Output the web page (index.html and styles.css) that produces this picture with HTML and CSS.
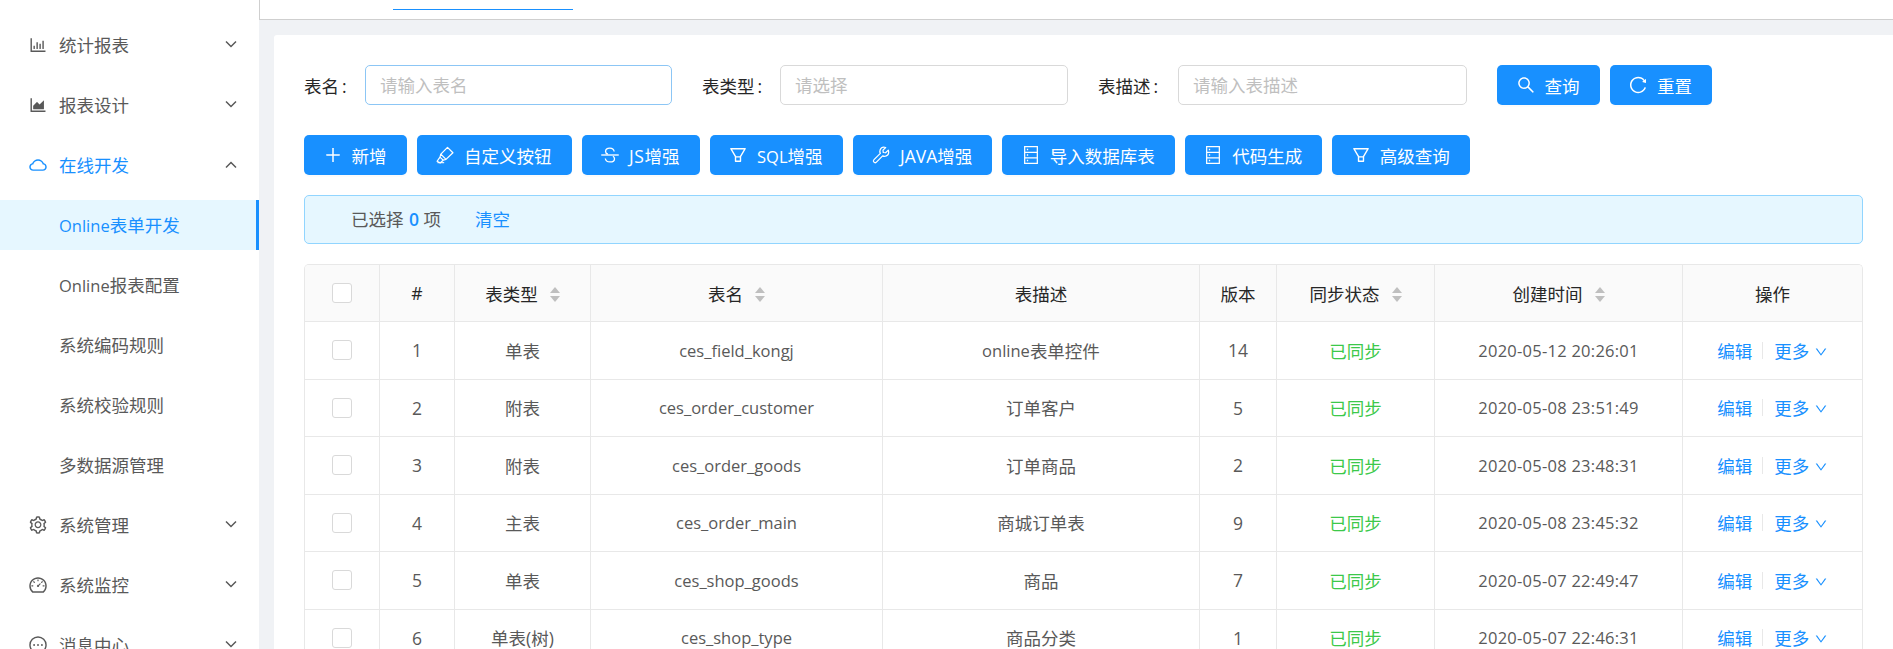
FILE: index.html
```html
<!DOCTYPE html>
<html lang="zh-CN">
<head>
<meta charset="utf-8">
<title>Online表单开发</title>
<link rel="stylesheet" href="styles.css">
</head>
<body>
<svg class="defs" aria-hidden="true">
  <symbol id="i-bar" viewBox="0 0 1024 1024"><path d="M888 792H200V168c0-4.400-3.600-8-8-8h-56c-4.400 0-8 3.600-8 8v688c0 4.400 3.600 8 8 8h752c4.400 0 8-3.600 8-8v-56c0-4.400-3.600-8-8-8zm-600-80h56c4.400 0 8-3.600 8-8V560c0-4.400-3.600-8-8-8h-56c-4.400 0-8 3.600-8 8v144c0 4.400 3.600 8 8 8zm152 0h56c4.400 0 8-3.600 8-8V384c0-4.400-3.600-8-8-8h-56c-4.400 0-8 3.600-8 8v320c0 4.400 3.600 8 8 8zm152 0h56c4.400 0 8-3.600 8-8V462c0-4.400-3.600-8-8-8h-56c-4.400 0-8 3.600-8 8v242c0 4.400 3.600 8 8 8zm152 0h56c4.400 0 8-3.600 8-8V304c0-4.400-3.600-8-8-8h-56c-4.400 0-8 3.600-8 8v400c0 4.400 3.600 8 8 8z"/></symbol>
  <symbol id="i-area" viewBox="0 0 1024 1024"><path d="M888 792H200V168c0-4.400-3.600-8-8-8h-56c-4.400 0-8 3.600-8 8v688c0 4.400 3.600 8 8 8h752c4.400 0 8-3.600 8-8v-56c0-4.400-3.600-8-8-8zm-616-64h536c4.400 0 8-3.600 8-8V284c0-7.200-8.700-10.700-13.700-5.700L592 488.600l-125.400-124a8.030 8.030 0 0 0-11.300 0l-189 189.600a7.870 7.870 0 0 0-2.300 5.600V720c0 4.400 3.600 8 8 8z"/></symbol>
  <symbol id="i-cloud" viewBox="0 0 1024 1024"><path d="M811.400 418.700C765.600 297.900 648.900 212 512.200 212S258.800 297.800 213 418.600C127.300 441.100 64 519.100 64 612c0 110.500 89.500 200 199.900 200h496.200C870.500 812 960 722.500 960 612c0-92.700-63.100-170.700-148.600-193.300zm36.300 281a123.070 123.070 0 0 1-87.600 36.300H263.900c-33.100 0-64.200-12.900-87.600-36.300A123.300 123.300 0 0 1 140 612c0-28 9.100-54.300 26.200-76.300a125.700 125.700 0 0 1 66.100-43.700l37.900-9.900 13.900-36.600c8.600-22.800 20.600-44.100 35.700-63.400a245.600 245.600 0 0 1 52.400-49.900c41.100-28.900 89.500-44.200 140-44.200s98.900 15.300 140 44.200c19.900 14 37.500 30.800 52.400 49.900 15.100 19.300 27.100 40.700 35.700 63.400l13.800 36.500 37.800 10c54.300 14.500 92.100 63.800 92.100 120 0 33.100-12.900 64.300-36.300 87.700z"/></symbol>
  <symbol id="i-setting" viewBox="0 0 1024 1024"><path d="M924.800 625.700l-65.500-56c3.100-19 4.700-38.400 4.700-57.800s-1.600-38.800-4.700-57.800l65.500-56a32.030 32.030 0 0 0 9.300-35.200l-.9-2.600a443.740 443.740 0 0 0-79.700-137.900l-1.800-2.100a32.120 32.120 0 0 0-35.100-9.500l-81.300 28.900c-30-24.600-63.500-44-99.700-57.600l-15.700-85a32.050 32.050 0 0 0-25.800-25.700l-2.700-.5c-52.100-9.400-106.900-9.400-159 0l-2.700.5a32.050 32.050 0 0 0-25.800 25.700l-15.800 85.400a351.860 351.860 0 0 0-99 57.400l-81.900-29.100a32 32 0 0 0-35.100 9.500l-1.800 2.100a446.020 446.020 0 0 0-79.700 137.900l-.9 2.600c-4.500 12.500-.8 26.500 9.300 35.200l66.300 56.600c-3.100 18.800-4.600 38-4.600 57.100 0 19.200 1.500 38.400 4.600 57.100L99 625.500a32.030 32.030 0 0 0-9.300 35.200l.9 2.600c18.100 50.400 44.900 96.900 79.700 137.900l1.800 2.100a32.120 32.120 0 0 0 35.100 9.500l81.900-29.100c29.800 24.500 63.100 43.900 99 57.400l15.800 85.400a32.050 32.050 0 0 0 25.800 25.700l2.700.5a449.400 449.400 0 0 0 159 0l2.700-.5a32.050 32.050 0 0 0 25.800-25.700l15.700-85a350 350 0 0 0 99.700-57.600l81.300 28.900a32 32 0 0 0 35.100-9.500l1.800-2.100c34.800-41.100 61.600-87.500 79.700-137.900l.9-2.600c4.500-12.300.8-26.300-9.300-35zM788.300 465.900c2.500 15.100 3.800 30.600 3.800 46.100s-1.300 31-3.800 46.100l-6.600 40.100 74.700 63.900a370.030 370.030 0 0 1-42.600 73.600L721 702.800l-31.400 25.800c-23.900 19.600-50.500 35-79.300 45.800l-38.100 14.300-17.900 97a377.500 377.500 0 0 1-85 0l-17.900-97.200-37.800-14.500c-28.500-10.800-55-26.200-78.700-45.700l-31.400-25.900-93.400 33.200c-17-22.900-31.200-47.600-42.600-73.600l75.500-64.500-6.500-40c-2.400-14.900-3.700-30.300-3.700-45.500 0-15.300 1.200-30.600 3.700-45.500l6.500-40-75.500-64.500c11.300-26.100 25.600-50.700 42.600-73.600l93.400 33.200 31.400-25.900c23.700-19.500 50.200-34.900 78.700-45.700l37.900-14.300 17.900-97.200c28.100-3.200 56.800-3.200 85 0l17.900 97 38.100 14.300c28.700 10.800 55.400 26.200 79.300 45.800l31.400 25.800 92.800-32.900c17 22.900 31.200 47.600 42.600 73.600L781.800 426l6.500 39.900zM512 326c-97.200 0-176 78.800-176 176s78.800 176 176 176 176-78.800 176-176-78.800-176-176-176zm79.200 255.200A111.600 111.600 0 0 1 512 614c-29.900 0-58-11.700-79.200-32.800A111.600 111.600 0 0 1 400 502c0-29.900 11.700-58 32.800-79.200C454 401.600 482.100 390 512 390c29.900 0 58 11.600 79.200 32.800A111.600 111.600 0 0 1 624 502c0 29.900-11.700 58-32.800 79.200z"/></symbol>
  <symbol id="i-dash" viewBox="0 0 1024 1024"><path d="M924.800 385.600a446.700 446.700 0 0 0-96-142.400 446.700 446.700 0 0 0-142.400-96C631.100 123.800 572.500 112 512 112s-119.100 11.800-174.400 35.200a446.700 446.700 0 0 0-142.400 96 446.700 446.700 0 0 0-96 142.400C75.800 440.900 64 499.500 64 560c0 132.700 58.300 257.700 159.900 343.100l1.700 1.400c5.800 4.800 13.100 7.500 20.600 7.500h531.700c7.500 0 14.800-2.700 20.600-7.500l1.700-1.400C901.700 817.700 960 692.700 960 560c0-60.500-11.900-119.100-35.200-174.400zM761.400 836H262.600A371.120 371.120 0 0 1 140 560c0-99.400 38.700-192.800 109-263 70.300-70.300 163.700-109 263-109 99.400 0 192.800 38.700 263 109 70.300 70.300 109 163.700 109 263 0 105.600-44.500 205.500-122.600 276zM623.500 421.500a8.030 8.030 0 0 0-11.300 0L527.700 506c-18.700-5-39.400-.2-54.100 14.500a55.950 55.950 0 0 0 0 79.200 55.950 55.950 0 0 0 79.200 0 55.870 55.870 0 0 0 14.500-54.100l84.500-84.500c3.100-3.100 3.100-8.200 0-11.300l-28.300-28.300zM490 320h44c4.400 0 8-3.600 8-8v-80c0-4.400-3.600-8-8-8h-44c-4.400 0-8 3.600-8 8v80c0 4.400 3.600 8 8 8zm260 218v44c0 4.400 3.600 8 8 8h80c4.400 0 8-3.600 8-8v-44c0-4.400-3.600-8-8-8h-80c-4.400 0-8 3.600-8 8zm12.700-197.200l-31.100-31.100a8.030 8.030 0 0 0-11.300 0l-56.600 56.600a8.030 8.030 0 0 0 0 11.300l31.100 31.100c3.100 3.100 8.200 3.100 11.300 0l56.600-56.600c3.100-3.100 3.100-8.200 0-11.300zm-458.600-31.100a8.030 8.030 0 0 0-11.300 0l-31.100 31.100a8.030 8.030 0 0 0 0 11.300l56.600 56.600c3.100 3.100 8.200 3.100 11.300 0l31.100-31.100c3.100-3.100 3.100-8.200 0-11.300l-56.600-56.600zM262 530h-80c-4.400 0-8 3.600-8 8v44c0 4.400 3.600 8 8 8h80c4.400 0 8-3.600 8-8v-44c0-4.400-3.600-8-8-8z"/></symbol>
  <symbol id="i-msg" viewBox="0 0 1024 1024"><circle cx="512" cy="512" r="412" fill="none" stroke="currentColor" stroke-width="72"/><circle cx="312" cy="512" r="48"/><circle cx="512" cy="512" r="48"/><circle cx="712" cy="512" r="48"/></symbol>
  <symbol id="i-down" viewBox="0 0 12 12"><path d="M1 3.500 6 8.500 11 3.500" fill="none" stroke="currentColor" stroke-width="1.500"/></symbol>
  <symbol id="i-up" viewBox="0 0 12 12"><path d="M1 8.500 6 3.500 11 8.500" fill="none" stroke="currentColor" stroke-width="1.500"/></symbol>
  <symbol id="i-thin" viewBox="0 0 1024 1024"><path d="M884 256h-75c-5.100 0-9.900 2.500-12.900 6.600L512 654.200 227.900 262.600c-3-4.100-7.800-6.600-12.900-6.600h-75c-6.500 0-10.300 7.400-6.500 12.700l352.600 486.100c12.800 17.600 39 17.600 51.700 0l352.600-486.100c3.900-5.300.1-12.700-6.400-12.700z"/></symbol>
  <symbol id="i-search" viewBox="0 0 1024 1024"><path d="M909.600 854.500L649.900 594.800C690.200 542.700 712 479 712 412c0-80.200-31.300-155.400-87.900-212.100-56.600-56.700-132-87.900-212.100-87.900s-155.500 31.300-212.100 87.900C143.200 256.500 112 331.800 112 412c0 80.100 31.300 155.500 87.900 212.100C256.500 680.800 331.800 712 412 712c67 0 130.600-21.800 182.700-62l259.700 259.600a8.200 8.200 0 0 0 11.600 0l43.600-43.500a8.200 8.200 0 0 0 0-11.600zM570.400 570.400C528 612.700 471.800 636 412 636s-116-23.300-158.400-65.600C211.300 528 188 471.800 188 412s23.300-116.100 65.600-158.400C296 211.300 352.200 188 412 188s116.100 23.200 158.400 65.600S636 352.200 636 412s-23.300 116.100-65.600 158.400z"/></symbol>
  <symbol id="i-reload" viewBox="0 0 1024 1024"><path d="M909.100 209.300l-56.400 44.100C775.800 155.100 656.200 92 521.900 92 290 92 102.300 279.500 102 511.500 101.700 743.700 289.800 932 521.900 932c181.300 0 335.800-115 394.600-276.100 1.500-4.200-.7-8.900-4.900-10.300l-56.700-19.500a8 8 0 0 0-10.100 4.800c-1.800 5-3.800 10-5.900 14.900-17.300 41-42.100 77.800-73.700 109.400A344.770 344.770 0 0 1 655.900 829c-42.300 17.900-87.400 27-133.800 27-46.500 0-91.500-9.100-133.800-27A341.500 341.500 0 0 1 279 755.200a342.160 342.160 0 0 1-73.700-109.400c-17.900-42.400-27-87.400-27-133.900s9.100-91.500 27-133.900c17.300-41 42.100-77.800 73.700-109.400 31.600-31.600 68.400-56.400 109.300-73.800 42.300-17.900 87.400-27 133.800-27 46.500 0 91.500 9.100 133.800 27a341.500 341.500 0 0 1 109.300 73.800c9.900 9.900 19.200 20.400 27.800 31.400l-60.200 47a8 8 0 0 0 3 14.100l175.600 43c5 1.200 9.900-2.600 9.900-7.700l.8-180.900c-.1-6.600-7.800-10.300-13-6.200z"/></symbol>
  <symbol id="i-plus" viewBox="0 0 1024 1024"><path d="M482 152h60q8 0 8 8v704q0 8-8 8h-60q-8 0-8-8V160q0-8 8-8z"/><path d="M176 474h672q8 0 8 8v60q0 8-8 8H176q-8 0-8-8v-60q0-8 8-8z"/></symbol>
  <symbol id="i-filter" viewBox="0 0 1024 1024"><path d="M880.100 154H143.900c-24.500 0-39.800 26.700-27.500 48L349 597.400V838c0 17.700 14.200 32 31.800 32h262.400c17.600 0 31.800-14.300 31.800-32V597.400L907.700 202c12.200-21.300-3.100-48-27.600-48zM603.400 798H420.600V642h182.900v156zm9.600-236.600l-9.500 16.600h-183l-9.500-16.600L212.700 226h598.600L613 561.400z"/></symbol>
  <symbol id="i-high" viewBox="0 0 24 24"><path d="M15 2.800 21.500 9.300 13.200 17.300 7 11ZM7 11 6 14.500 9.800 18.200 13.200 17.300M6 14.500 2.500 19.500 6.200 21.500 9.800 18.200" fill="none" stroke="currentColor" stroke-width="1.500" stroke-linejoin="round"/><path d="M3 21.200H11" fill="none" stroke="currentColor" stroke-width="1.300"/></symbol>
  <symbol id="i-strike" viewBox="0 0 24 24"><path d="M1.500 12H22.500" fill="none" stroke="currentColor" stroke-width="1.600"/><path d="M17 7.800C16.500 5 14.500 3.800 11.800 3.800 8.800 3.800 6.700 5.200 6.700 7.700 6.700 9.200 7.500 10.400 9.500 11M15.500 13.500C16.800 14.300 17.400 15.400 17.400 16.400 17.400 18.900 15.200 20.300 12 20.300 9 20.300 6.800 18.900 6.400 16.200" fill="none" stroke="currentColor" stroke-width="1.600"/></symbol>
  <symbol id="i-tool" viewBox="0 0 24 24"><path d="M20.800 6.200 17.500 9.300 14.700 9 14.400 6.200 17.600 3C14.800 2.200 12 3.300 11 5.700 10.400 7.200 10.500 8.800 11.200 10L3.600 17.600C2.700 18.500 2.700 19.800 3.500 20.600 4.300 21.400 5.600 21.400 6.500 20.500L14 13C15.300 13.700 16.900 13.700 18.300 13.100 20.700 12 21.700 9 20.800 6.200Z" fill="none" stroke="currentColor" stroke-width="1.500" stroke-linejoin="round"/></symbol>
  <symbol id="i-db" viewBox="0 0 24 24"><path d="M4.400 2H19.600V22H4.400ZM4.400 8.700H19.600M4.400 15.300H19.600" fill="none" stroke="currentColor" stroke-width="1.500"/><path d="M7 4.600H8.600V6.200H7ZM7 11.200H8.600V12.800H7ZM7 17.800H8.600V19.400H7Z"/></symbol>
</svg>

<div class="app">
  <nav class="sidebar">
    <a class="menu-item"><svg class="menu-icon"><use href="#i-bar"/></svg><span class="menu-text">统计报表</span><svg class="chev"><use href="#i-down"/></svg></a>
    <a class="menu-item"><svg class="menu-icon"><use href="#i-area"/></svg><span class="menu-text">报表设计</span><svg class="chev"><use href="#i-down"/></svg></a>
    <a class="menu-item is-open"><svg class="menu-icon"><use href="#i-cloud"/></svg><span class="menu-text">在线开发</span><svg class="chev"><use href="#i-up"/></svg></a>
    <a class="menu-item sub is-active"><span class="menu-text"><span class="lat">Online</span>表单开发</span></a>
    <a class="menu-item sub"><span class="menu-text"><span class="lat">Online</span>报表配置</span></a>
    <a class="menu-item sub"><span class="menu-text">系统编码规则</span></a>
    <a class="menu-item sub"><span class="menu-text">系统校验规则</span></a>
    <a class="menu-item sub"><span class="menu-text">多数据源管理</span></a>
    <a class="menu-item"><svg class="menu-icon"><use href="#i-setting"/></svg><span class="menu-text">系统管理</span><svg class="chev"><use href="#i-down"/></svg></a>
    <a class="menu-item"><svg class="menu-icon"><use href="#i-dash"/></svg><span class="menu-text">系统监控</span><svg class="chev"><use href="#i-down"/></svg></a>
    <a class="menu-item"><svg class="menu-icon"><use href="#i-msg"/></svg><span class="menu-text">消息中心</span><svg class="chev"><use href="#i-down"/></svg></a>
  </nav>

  <main class="main">
    <div class="topbar"><div class="tab-line"></div></div>
    <section class="card">
      <form class="filters">
        <label class="field f-name"><span class="field-label l-name">表名<span class="colon">:</span></span><input class="input is-focus" placeholder="请输入表名"></label>
        <label class="field f-type"><span class="field-label l-type">表类型<span class="colon">:</span></span><input class="input" placeholder="请选择"></label>
        <label class="field f-desc"><span class="field-label l-desc">表描述<span class="colon">:</span></span><input class="input" placeholder="请输入表描述"></label>
        <div class="filter-actions">
          <button type="button" class="btn"><svg class="btn-icon"><use href="#i-search"/></svg>查询</button>
          <button type="button" class="btn"><svg class="btn-icon"><use href="#i-reload"/></svg>重置</button>
        </div>
      </form>

      <div class="toolbar">
        <button type="button" class="btn"><svg class="btn-icon"><use href="#i-plus"/></svg>新增</button>
        <button type="button" class="btn"><svg class="btn-icon"><use href="#i-high"/></svg>自定义按钮</button>
        <button type="button" class="btn"><svg class="btn-icon"><use href="#i-strike"/></svg><span><span class="wide">JS</span>增强</span></button>
        <button type="button" class="btn"><svg class="btn-icon"><use href="#i-filter"/></svg><span><span class="lat">SQL</span>增强</span></button>
        <button type="button" class="btn"><svg class="btn-icon"><use href="#i-tool"/></svg>JAVA增强</button>
        <button type="button" class="btn"><svg class="btn-icon"><use href="#i-db"/></svg>导入数据库表</button>
        <button type="button" class="btn"><svg class="btn-icon"><use href="#i-db"/></svg>代码生成</button>
        <button type="button" class="btn"><svg class="btn-icon"><use href="#i-filter"/></svg>高级查询</button>
      </div>

      <div class="alert"><span class="alert-text">已选择 <b class="alert-num">0</b> 项</span><a class="alert-clear">清空</a></div>

      <div class="table">
        <div class="row head">
          <div class="cell"><span class="check"></span></div>
          <div class="cell">#</div>
          <div class="cell">表类型<span class="sort"></span></div>
          <div class="cell">表名<span class="sort"></span></div>
          <div class="cell">表描述</div>
          <div class="cell">版本</div>
          <div class="cell">同步状态<span class="sort"></span></div>
          <div class="cell">创建时间<span class="sort"></span></div>
          <div class="cell">操作</div>
        </div>
        <div class="row">
          <div class="cell"><span class="check"></span></div><div class="cell">1</div><div class="cell">单表</div><div class="cell lat">ces_field_kongj</div><div class="cell"><span class="lat">online</span>表单控件</div><div class="cell">14</div><div class="cell ok">已同步</div><div class="cell lat date">2020-05-12 20:26:01</div>
          <div class="cell"><a class="link">编辑</a><i class="divider"></i><a class="link">更多</a><svg class="more"><use href="#i-thin"/></svg></div>
        </div>
        <div class="row">
          <div class="cell"><span class="check"></span></div><div class="cell">2</div><div class="cell">附表</div><div class="cell lat">ces_order_customer</div><div class="cell">订单客户</div><div class="cell">5</div><div class="cell ok">已同步</div><div class="cell lat date">2020-05-08 23:51:49</div>
          <div class="cell"><a class="link">编辑</a><i class="divider"></i><a class="link">更多</a><svg class="more"><use href="#i-thin"/></svg></div>
        </div>
        <div class="row">
          <div class="cell"><span class="check"></span></div><div class="cell">3</div><div class="cell">附表</div><div class="cell lat">ces_order_goods</div><div class="cell">订单商品</div><div class="cell">2</div><div class="cell ok">已同步</div><div class="cell lat date">2020-05-08 23:48:31</div>
          <div class="cell"><a class="link">编辑</a><i class="divider"></i><a class="link">更多</a><svg class="more"><use href="#i-thin"/></svg></div>
        </div>
        <div class="row">
          <div class="cell"><span class="check"></span></div><div class="cell">4</div><div class="cell">主表</div><div class="cell lat">ces_order_main</div><div class="cell">商城订单表</div><div class="cell">9</div><div class="cell ok">已同步</div><div class="cell lat date">2020-05-08 23:45:32</div>
          <div class="cell"><a class="link">编辑</a><i class="divider"></i><a class="link">更多</a><svg class="more"><use href="#i-thin"/></svg></div>
        </div>
        <div class="row">
          <div class="cell"><span class="check"></span></div><div class="cell">5</div><div class="cell">单表</div><div class="cell lat">ces_shop_goods</div><div class="cell">商品</div><div class="cell">7</div><div class="cell ok">已同步</div><div class="cell lat date">2020-05-07 22:49:47</div>
          <div class="cell"><a class="link">编辑</a><i class="divider"></i><a class="link">更多</a><svg class="more"><use href="#i-thin"/></svg></div>
        </div>
        <div class="row">
          <div class="cell"><span class="check"></span></div><div class="cell">6</div><div class="cell">单表(树)</div><div class="cell lat">ces_shop_type</div><div class="cell">商品分类</div><div class="cell">1</div><div class="cell ok">已同步</div><div class="cell lat date">2020-05-07 22:46:31</div>
          <div class="cell"><a class="link">编辑</a><i class="divider"></i><a class="link">更多</a><svg class="more"><use href="#i-thin"/></svg></div>
        </div>
      </div>
    </section>
  </main>
</div>
</body>
</html>
```

FILE: styles.css
```css
* { box-sizing: border-box; }
html, body { margin: 0; height: 100%; overflow: hidden; }
body {
  font-family: "Open Sans", "Noto Sans CJK SC", sans-serif;
  font-size: 17.5px;
  color: #595959;
  background: #f0f2f5;
}
.defs { display: none; }
.app { display: flex; height: 649px; overflow: hidden; }
.lat { font-size: 16.5px; }
.date { letter-spacing: .25px; }
.wide { letter-spacing: .6px; }

/* sidebar */
.sidebar {
  flex: none;
  width: 259px;
  height: 649px;
  padding-top: 20px;
  background: #fff;
  overflow: hidden;
}
.menu-item {
  display: flex;
  align-items: center;
  height: 50px;
  margin-bottom: 10px;
  padding: 0 22px 0 28px;
  color: #595959;
}
.menu-icon { flex: none; width: 20px; height: 20px; margin-right: 11px; fill: currentColor; color: #595959; }
.menu-text { flex: 1; padding-bottom: 2px; white-space: nowrap; }
.chev { flex: none; width: 12px; height: 12px; margin-top: -2px; color: #595959; }
.is-open { color: #1890ff; }
.is-open .menu-icon { color: #1890ff; }
.is-open .chev { margin-top: 0; }
.sub { padding-left: 59px; }
.is-active { background: #e6f7ff; color: #1890ff; border-right: 3px solid #1890ff; }

/* main */
.main { flex: 1; min-width: 0; }
.topbar {
  height: 20px;
  padding: 9px 0 0 133px;
  background: #fff;
  border-bottom: 1px solid #cfcfcf;
  border-left: 1px solid #cfcfcf;
}
.tab-line { width: 180px; height: 1px; background: #1890ff; }
.card {
  margin: 15px 0 0 15px;
  padding: 30px 30px 0;
  background: #fff;
  border-radius: 3px 0 0 0;
}

/* filters */
.filters { display: flex; gap: 30px; height: 40px; }
.field { display: flex; align-items: center; color: #262626; }
.f-name { width: 368px; }
.f-type { width: 366px; }
.f-desc { width: 369px; }
.field-label { flex: none; white-space: nowrap; }
.colon { margin-left: 3px; }
.l-name { width: 61px; }
.l-type { width: 78px; }
.l-desc { width: 80px; }
.input {
  flex: 1;
  min-width: 0;
  height: 40px;
  padding: 0 14px;
  font: inherit;
  color: #595959;
  background: #fff;
  border: 1px solid #d9d9d9;
  border-radius: 5px;
  outline: none;
}
.input::placeholder { color: #bfbfbf; opacity: 1; }
.is-focus { border-color: #8cc6f5; }
.filter-actions { display: flex; gap: 10px; }

/* buttons */
.btn {
  display: inline-flex;
  align-items: center;
  justify-content: center;
  height: 40px;
  padding: 0 20px;
  font: inherit;
  color: #fff;
  white-space: nowrap;
  background: #1890ff;
  border: 0;
  border-radius: 5px;
  box-shadow: 0 2px 0 rgba(0, 0, 0, .015);
}
.btn-icon { flex: none; width: 20px; height: 20px; margin: 0 9px 0 -1.500px; fill: currentColor; color: #fff; }
.toolbar { display: flex; gap: 10px; margin-top: 30px; }

/* alert */
.alert {
  display: flex;
  align-items: center;
  height: 49px;
  margin-top: 20px;
  padding: 0 0 2px 46px;
  background: #e6f7ff;
  border: 1px solid #91d5ff;
  border-radius: 5px;
}
.alert-num { margin-left: 1px; font-weight: 600; color: #1890ff; }
.alert-clear { margin-left: 34px; color: #1890ff; }

/* table */
.table {
  margin-top: 20px;
  border: solid #e8e8e8;
  border-width: 1px 1px 0 1px;
  border-radius: 5px 5px 0 0;
  overflow: hidden;
}
.row {
  display: grid;
  grid-template-columns: 75px 75px 136px 292px 317px 77px 158px 248px 1fr;
  height: 57.500px;
  border-bottom: 1px solid #e8e8e8;
}
.head { height: 57px; color: #262626; background: #fafafa; }
.cell {
  display: flex;
  align-items: center;
  justify-content: center;
  min-width: 0;
  white-space: nowrap;
  border-right: 1px solid #e8e8e8;
}
.cell:last-child { border-right: 0; }
.ok { color: #3cc94a; }
.check {
  width: 20px;
  height: 20px;
  background: #fff;
  border: 1px solid #d9d9d9;
  border-radius: 3px;
}
.sort {
  position: relative;
  flex: none;
  width: 10px;
  height: 15px;
  margin: 2px 0 0 12px;
}
.sort::before, .sort::after {
  content: "";
  position: absolute;
  left: 0;
  border-left: 5px solid transparent;
  border-right: 5px solid transparent;
}
.sort::before { top: 0; border-bottom: 6.500px solid #bfbfbf; }
.sort::after { bottom: 0; border-top: 6.500px solid #bfbfbf; }
.link { color: #1890ff; }
.divider { flex: none; width: 1px; height: 17px; margin: 0 11px 0 10px; background: #e8e8e8; }
.more { flex: none; width: 14px; height: 14px; margin: 3px 0 0 4.500px; fill: #1890ff; }
```
